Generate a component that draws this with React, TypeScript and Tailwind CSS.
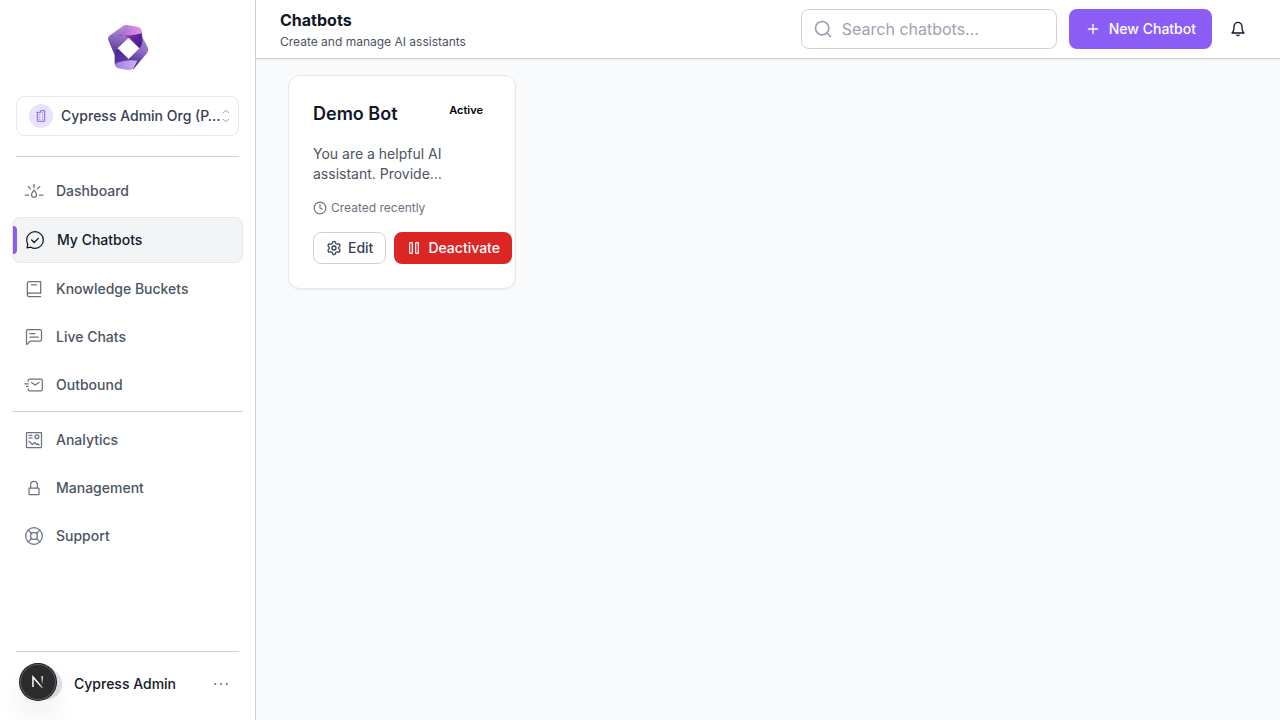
import type { ReactNode } from "react";
import { Clock, Plus, Search, Settings } from "lucide-react";

export default function App() {
  return (
    <div className="flex h-screen bg-[#f8fafc] font-['Inter',sans-serif] text-[#111827]">
      <Sidebar />
      <div className="flex min-w-0 flex-1 flex-col">
        <Header />
        <main className="flex-1 overflow-auto px-8 py-4">
          <div className="grid grid-cols-4 gap-4">
            <BotCard />
          </div>
        </main>
      </div>
      <DevBadge />
    </div>
  );
}

const Icon = ({
  className,
  strokeWidth = 1.5,
  viewBox = "0 0 24 24",
  children,
}: {
  className: string;
  strokeWidth?: number;
  viewBox?: string;
  children: ReactNode;
}) => (
  <svg
    viewBox={viewBox}
    fill="none"
    stroke="currentColor"
    strokeWidth={strokeWidth}
    strokeLinecap="round"
    strokeLinejoin="round"
    aria-hidden="true"
    className={`shrink-0 ${className}`}
  >
    {children}
  </svg>
);

const mainLinks = [
  {
    label: "Dashboard",
    icon: (
      <>
        <path d="M12 4v4M5 6.5l2.8 3M19 6.5l-2.8 3M1.5 17h4M18.5 17h4" />
        <path d="M12 11c-1.5 2-3 3.6-3 5.4a3 3 0 0 0 6 0C15 14.6 13.5 13 12 11Z" />
      </>
    ),
  },
  {
    label: "My Chatbots",
    active: true,
    icon: (
      <>
        <path d="M8 12L11 15L16 10" />
        <path d="M12 22C17.5228 22 22 17.5228 22 12C22 6.47715 17.5228 2 12 2C6.47715 2 2 6.47715 2 12C2 13.8214 2.48697 15.5291 3.33782 17L2.5 21.5L7 20.6622C8.47087 21.513 10.1786 22 12 22Z" />
      </>
    ),
  },
  {
    label: "Knowledge Buckets",
    icon: (
      <>
        <path d="M4 19V5C4 3.89543 4.89543 3 6 3H19.4C19.7314 3 20 3.26863 20 3.6V16.7143" />
        <path d="M6 17H20M6 21H20M9 7H15" />
        <path d="M6 21C4.89543 21 4 20.1046 4 19C4 17.8954 4.89543 17 6 17" />
      </>
    ),
  },
  {
    label: "Live Chats",
    icon: (
      <>
        <path d="M7 12H17M7 8H13" />
        <path d="M3 20.2895V5C3 3.89543 3.89543 3 5 3H19C20.1046 3 21 3.89543 21 5V15C21 16.1046 20.1046 17 19 17H7.96125C7.35368 17 6.77906 17.2762 6.39951 17.7506L4.06852 20.6643C3.71421 21.1072 3 20.8567 3 20.2895Z" />
      </>
    ),
  },
  {
    label: "Outbound",
    icon: (
      <>
        <path d="M9 9L13.5 12L18 9M3 13.5H5M1 10.5H5" />
        <path d="M5 7.5V7C5 5.89543 5.89543 5 7 5H20C21.1046 5 22 5.89543 22 7V17C22 18.1046 21.1046 19 20 19H7C5.89543 19 5 18.1046 5 17V16.5" />
      </>
    ),
  },
];

const moreLinks = [
  {
    label: "Analytics",
    icon: (
      <>
        <rect x="3" y="3" width="18" height="18" rx="0.6" />
        <path d="M6 6.5h3.5M6 9.5h3.5M6 13.5l4 4 3-2.5 2 2.5 1.5-1L18 18" />
        <circle cx="15.5" cy="8" r="2.3" />
      </>
    ),
  },
  {
    label: "Management",
    icon: (
      <path d="M16 12H17.4C17.7314 12 18 12.2686 18 12.6V19.4C18 19.7314 17.7314 20 17.4 20H6.6C6.26863 20 6 19.7314 6 19.4V12.6C6 12.2686 6.26863 12 6.6 12H8M16 12V8C16 6.66667 15.2 4 12 4C8.8 4 8 6.66667 8 8V12M16 12H8" />
    ),
  },
  {
    label: "Support",
    icon: (
      <>
        <circle cx="12" cy="12" r="10" />
        <rect x="8" y="8" width="8" height="8" rx="3" />
        <path d="M9 9 5 5M15 9 19 5M9 15 5 19M15 15 19 19" />
      </>
    ),
  },
];

const Sidebar = () => {
  return (
    <aside className="flex w-64 shrink-0 flex-col border-r border-[#d1d1db] bg-white">
      <div className="flex h-24 justify-center pt-4">
        <Logo />
      </div>
      <div className="mx-4 border-b border-[#d1d1db] pb-5">
        <button className="flex h-10 w-full items-center rounded-lg border border-[#e5e7eb] pr-2 pl-3">
          <span className="flex size-6 shrink-0 items-center justify-center rounded-full bg-[#e8e3fa] text-[#8b5cf6]">
            <Icon className="size-4">
              <path d="M6.5 6.5V20h11V4h-6v2.5H6.5Z" />
              <path d="M10 10h.01M14 10h.01M10 13.5h.01M14 13.5h.01M10 17h.01M14 17h.01M14.5 7h.01" />
            </Icon>
          </span>
          <span className="ml-2 flex-1 text-left text-sm font-medium whitespace-nowrap text-[#374151]">
            Cypress Admin Org (P…
          </span>
          <Icon className="h-4 w-2 text-[#6b7280]" viewBox="6 0 12 24" strokeWidth={1}>
            <path d="M8 7l4-3.5 4 3.5M8 17l4 3.5 4-3.5" />
          </Icon>
        </button>
      </div>
      <nav className="flex flex-1 flex-col gap-1 px-3 pt-3">
        {mainLinks.map((link) => (
          <NavItem key={link.label} {...link} />
        ))}
        <hr className="mb-0.5 border-[#d1d1db]" />
        {moreLinks.map((link) => (
          <NavItem key={link.label} {...link} />
        ))}
      </nav>
      <div className="mx-4 flex items-center border-t border-[#d1d1db] pt-4 pr-2 pb-5 pl-3.5">
        <span className="size-8 rounded-full bg-[#e0e0e8]" />
        <span className="ml-3 flex-1 text-sm font-medium">Cypress Admin</span>
        <button aria-label="Account menu" className="text-[#6b7280]">
          <Icon className="size-5">
            <path d="M5 12h.01M12 12h.01M19 12h.01" strokeWidth={2.5} />
          </Icon>
        </button>
      </div>
    </aside>
  );
};

const NavItem = ({
  label,
  icon,
  active,
}: {
  label: string;
  icon: ReactNode;
  active?: boolean;
}) => {
  if (active) {
    return (
      <a
        href="#"
        className="relative flex items-center gap-3 rounded-lg border border-[#e5e7eb] bg-[#f3f4f6] px-3 py-3 text-sm font-medium text-[#111827]"
      >
        <span className="absolute top-2 bottom-2 left-0 w-1 rounded-r-sm bg-[#8b5cf6]" />
        <Icon className="size-5">{icon}</Icon>
        {label}
      </a>
    );
  }

  return (
    <a
      href="#"
      className="flex items-center gap-3 rounded-lg px-3 py-3 text-sm font-medium text-[#4b5563]"
    >
      <Icon className="size-5 text-[#6b7280]">{icon}</Icon>
      {label}
    </a>
  );
};

const Header = () => {
  return (
    <header className="flex items-center justify-between border-b border-[#d1d1db] bg-white px-6 py-2 shadow-xs">
      <div>
        <h1 className="text-base leading-6 font-bold">Chatbots</h1>
        <p className="mt-0.5 text-xs leading-4 text-[#4b5563]">Create and manage AI assistants</p>
      </div>
      <div className="flex items-center gap-2">
        <div className="flex items-center gap-3">
          <div className="relative">
            <Search className="absolute top-2.5 left-3 size-5 text-[#9ca3af]" />
            <input
              type="text"
              aria-label="Search chatbots"
              placeholder="Search chatbots..."
              className="h-10 w-64 rounded-lg border border-[#d1d1db] bg-white pr-4 pl-10 text-base placeholder:text-[#9ca3af]"
            />
          </div>
          <button className="flex h-10 items-center gap-2 rounded-lg bg-[#8b5cf6] px-4 text-sm font-medium text-white">
            <Plus className="size-4" strokeWidth={2} />
            New Chatbot
          </button>
        </div>
        <button aria-label="Notifications" className="flex size-9 items-center justify-center">
          <Icon className="size-4" strokeWidth={2}>
            <path d="M18 8.4C18 6.70261 17.3679 5.07475 16.2426 3.87452C15.1174 2.67428 13.5913 2 12 2C10.4087 2 8.88258 2.67428 7.75736 3.87452C6.63214 5.07475 6 6.70261 6 8.4C6 15.8667 3 18 3 18H21C21 18 18 15.8667 18 8.4Z" />
            <path d="M13.73 21C13.38 21.6 12.7 22 12 22C11.3 22 10.62 21.6 10.27 21" />
          </Icon>
        </button>
      </div>
    </header>
  );
};

const BotCard = () => {
  return (
    <article className="rounded-xl border border-[#e5e7eb] bg-white p-6 shadow-xs">
      <div className="flex items-start justify-between">
        <h2 className="text-lg leading-7 font-semibold">Demo Bot</h2>
        <span className="px-2 py-0.5 text-[11px] leading-4 font-semibold text-black">Active</span>
      </div>
      <p className="mt-4 line-clamp-2 text-sm leading-5 text-[#4b5563]">
        You are a helpful AI assistant. Provide…
      </p>
      <div className="mt-4 flex items-center gap-1 text-xs leading-4 text-[#6b7280]">
        <Clock className="size-3.5" />
        Created recently
      </div>
      <div className="mt-4 flex gap-2">
        <button className="flex h-8 shrink-0 items-center gap-1.5 rounded-lg border border-[#d1d1db] bg-white px-3 text-sm font-medium text-[#374151]">
          <Settings className="size-4" />
          Edit
        </button>
        <button className="flex h-8 shrink-0 items-center gap-1.5 rounded-lg bg-[#dc2626] px-3 text-sm font-medium text-white">
          <Icon className="size-4" strokeWidth={1.8}>
            <rect x="5.5" y="4" width="4" height="16" rx="0.6" />
            <rect x="14.5" y="4" width="4" height="16" rx="0.6" />
          </Icon>
          Deactivate
        </button>
      </div>
    </article>
  );
};

const Logo = () => (
  <svg viewBox="0 0 192 192" className="size-16" role="img" aria-label="Logo">
    <defs>
      <linearGradient id="left" gradientUnits="userSpaceOnUse" x1="80" y1="35" x2="60" y2="120">
        <stop offset="0" stopColor="#b08ad8" />
        <stop offset="0.5" stopColor="#8560bb" />
        <stop offset="1" stopColor="#4c2c86" />
      </linearGradient>
      <linearGradient id="top" gradientUnits="userSpaceOnUse" x1="66" y1="60" x2="128" y2="36">
        <stop offset="0" stopColor="#a066c4" />
        <stop offset="1" stopColor="#dc90e2" />
      </linearGradient>
      <linearGradient id="fold" gradientUnits="userSpaceOnUse" x1="80" y1="55" x2="132" y2="90">
        <stop offset="0" stopColor="#8f48b8" />
        <stop offset="0.5" stopColor="#6428a4" />
        <stop offset="1" stopColor="#4a1f90" />
      </linearGradient>
      <linearGradient id="right" gradientUnits="userSpaceOnUse" x1="140" y1="65" x2="110" y2="148">
        <stop offset="0" stopColor="#a583d4" />
        <stop offset="0.5" stopColor="#8a66c4" />
        <stop offset="1" stopColor="#482683" />
      </linearGradient>
      <linearGradient id="bottom" gradientUnits="userSpaceOnUse" x1="62" y1="100" x2="90" y2="145">
        <stop offset="0" stopColor="#4a2492" />
        <stop offset="1" stopColor="#683cb2" />
      </linearGradient>
      <linearGradient id="base" gradientUnits="userSpaceOnUse" x1="60" y1="150" x2="115" y2="140">
        <stop offset="0" stopColor="#9a82de" />
        <stop offset="1" stopColor="#c9abf2" />
      </linearGradient>
    </defs>
    <path d="M82 29 40 59Q34 64 37 73L56 117 65 97 98 65 120 50 94 27Q87 26 82 29Z" fill="url(#left)" />
    <path d="M139 62 156 96Q158 104 154 110L112 160 80 140 98 129 130 97Z" fill="url(#right)" />
    <path d="M68 58Q84 48 92 27L128 33Q135 35 137 43L138 54Q112 62 68 58Z" fill="url(#top)" />
    <path d="M62 60Q104 62 138 52L139 72Q140 88 130 97L98 65Q80 54 62 60Z" fill="url(#fold)" />
    <path d="M124 134Q90 132 56 146L56 117Q57 104 65 97L98 129Q110 136 124 134Z" fill="url(#bottom)" />
    <path d="M124 134 112 158Q104 163 96 162L66 157Q58 154 56 144 88 130 124 134Z" fill="url(#base)" />
  </svg>
);

const DevBadge = () => {
  return (
    <div className="fixed bottom-5 left-5 flex size-9 items-center justify-center rounded-full bg-[#2b2b2b] shadow-[0_0_0_1px_#171717,inset_0_0_0_1px_#5a5a5a,0_16px_32px_-8px_rgba(0,0,0,0.24)]">
      <svg viewBox="0 0 12 14" fill="none" strokeWidth="1.5" className="h-3.5 w-3" aria-hidden="true">
        <defs>
          <linearGradient id="fade" x1="0" y1="0" x2="0" y2="1">
            <stop offset="0.3" stopColor="#fff" stopOpacity="0.8" />
            <stop offset="1" stopColor="#fff" stopOpacity="0.1" />
          </linearGradient>
          <linearGradient id="stroke" gradientUnits="userSpaceOnUse" x1="5" y1="6" x2="11" y2="14">
            <stop offset="0.3" stopColor="#fff" />
            <stop offset="1" stopColor="#fff" stopOpacity="0.3" />
          </linearGradient>
        </defs>
        <path d="M1 12V2L10.5 13" stroke="url(#stroke)" />
        <rect x="9.5" y="1" width="1.5" height="8" fill="url(#fade)" />
      </svg>
    </div>
  );
};
